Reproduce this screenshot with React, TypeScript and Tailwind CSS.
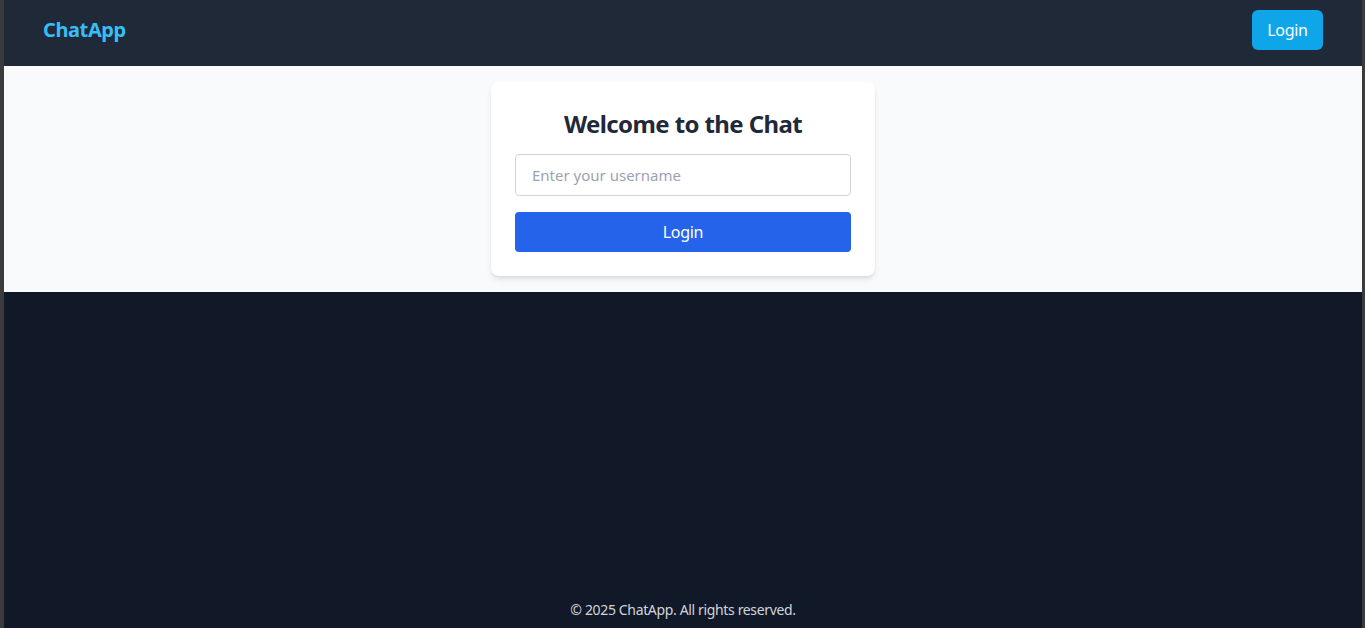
export default function App() {
  return (
    <div
      className="flex h-screen w-full bg-[#3b3b3b]"
      style={{ fontFamily: '"Noto Sans", "Open Sans", sans-serif' }}
    >
      <div className="ml-[4px] mr-[3px] flex min-w-0 flex-1 flex-col bg-[#111827]">
        <header className="flex h-[66px] items-start justify-between bg-[#1f2937] px-[39px] pt-[10px]">
          <span className="mt-[6px] text-xl font-bold tracking-[-0.4px] text-[#38bdf8]">
            ChatApp
          </span>
          <button
            type="button"
            className="h-10 w-[71px] rounded-md bg-[#0ea5e9] text-base tracking-[-0.3px] text-white"
          >
            Login
          </button>
        </header>
        <main className="flex justify-center bg-[#f9fafb] py-4">
          <div className="w-[384px] rounded-lg bg-white p-6 shadow-md">
            <h1 className="mb-3 text-center text-2xl leading-9 font-bold tracking-[-0.6px] text-[#1f2937]">
              Welcome to the Chat
            </h1>
            <input
              type="text"
              placeholder="Enter your username"
              className="mb-4 h-[42px] w-full rounded border border-[#d1d5db] px-4 text-[15px] text-[#111827] placeholder:text-[#9ca3af] focus:outline-none"
            />
            <button
              type="button"
              className="h-10 w-full rounded bg-[#2563eb] text-base tracking-[-0.3px] text-white"
            >
              Login
            </button>
          </div>
        </main>
        <div className="flex-1" />
        <footer className="pb-2 text-center text-sm tracking-[-0.35px] text-[#d1d5db]">
          © 2025 ChatApp. All rights reserved.
        </footer>
      </div>
    </div>
  );
}
